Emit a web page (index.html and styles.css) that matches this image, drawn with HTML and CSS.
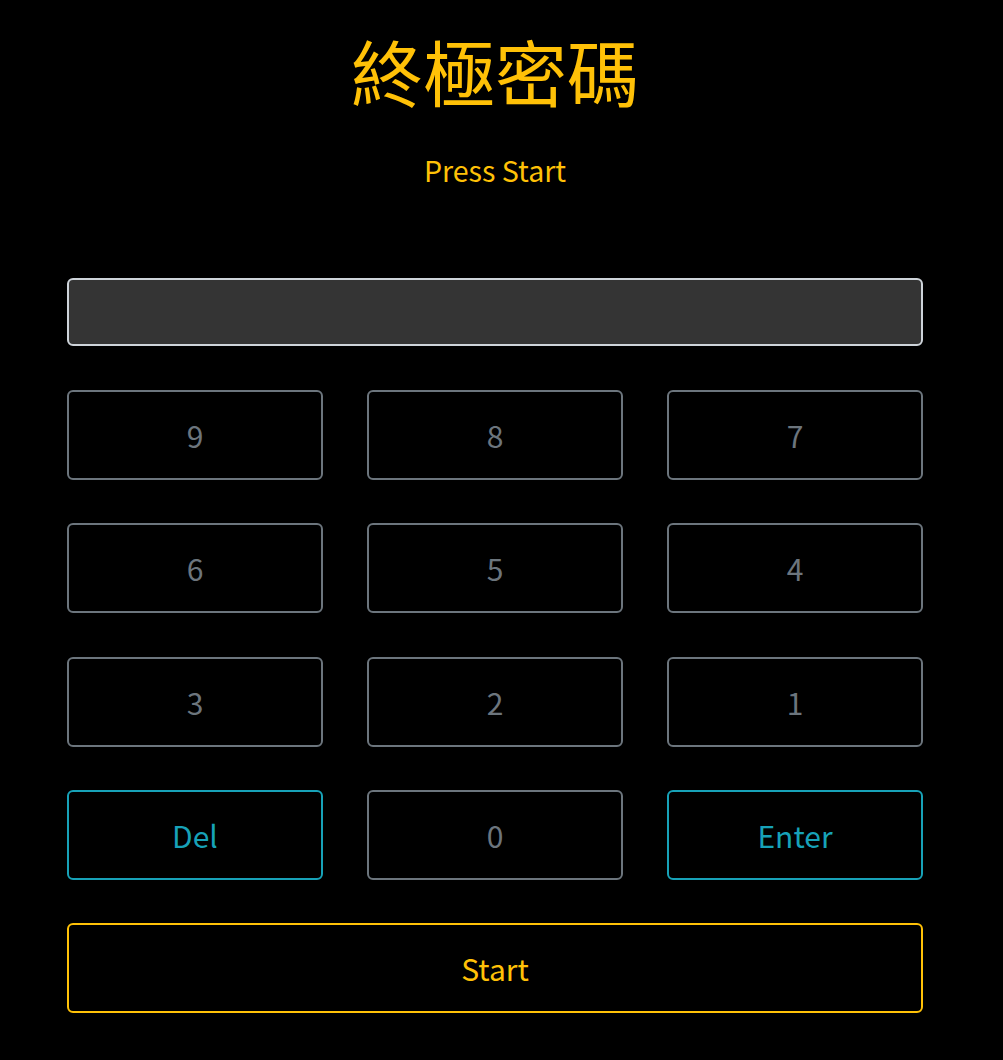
FILE: index.html
```html
<!DOCTYPE html>
<html lang="zh-Hant">
<head>
<meta charset="utf-8">
<title>終極密碼</title>
<link rel="stylesheet" href="styles.css">
</head>
<body>
<main class="game">
  <h1 class="title">終極密碼</h1>
  <p class="status">Press Start</p>
  <div class="display"></div>
  <div class="keypad">
    <button class="key">9</button>
    <button class="key">8</button>
    <button class="key">7</button>
    <button class="key">6</button>
    <button class="key">5</button>
    <button class="key">4</button>
    <button class="key">3</button>
    <button class="key">2</button>
    <button class="key">1</button>
    <button class="key key-info">Del</button>
    <button class="key">0</button>
    <button class="key key-info">Enter</button>
    <button class="key key-start">Start</button>
  </div>
</main>
</body>
</html>
```

FILE: styles.css
```css
html, body {
  margin: 0;
  padding: 0;
  background: #000;
}
body {
  font-family: "Noto Sans CJK TC", "Noto Sans", sans-serif;
}
.game {
  width: 856px;
  margin-left: 67px;
  display: flex;
  flex-direction: column;
  align-items: stretch;
}
.title {
  margin: 20px 0 0;
  font-size: 72px;
  font-weight: 400;
  line-height: 100px;
  color: #ffc107;
  text-align: center;
}
.status {
  margin: 30px 0 0;
  font-size: 28.6px;
  line-height: 40px;
  color: #ffc107;
  text-align: center;
}
.display {
  margin-top: 88px;
  height: 64px;
  background: #343434;
  border: 2px solid #ced4da;
  border-radius: 6px;
}
.keypad {
  margin-top: 44px;
  display: grid;
  grid-template-columns: repeat(3, 1fr);
  column-gap: 44px;
  row-gap: 43.3px;
}
.key {
  height: 90px;
  background: #000;
  border: 2px solid #6c757d;
  border-radius: 6px;
  color: #6c757d;
  font-family: "Noto Sans CJK TC", "Noto Sans", sans-serif;
  font-size: 30px;
  padding: 0;
}
.key-info {
  border-color: #17a2b8;
  color: #17a2b8;
}
.key-start {
  grid-column: 1 / -1;
  border-color: #ffc107;
  color: #ffc107;
}
```
